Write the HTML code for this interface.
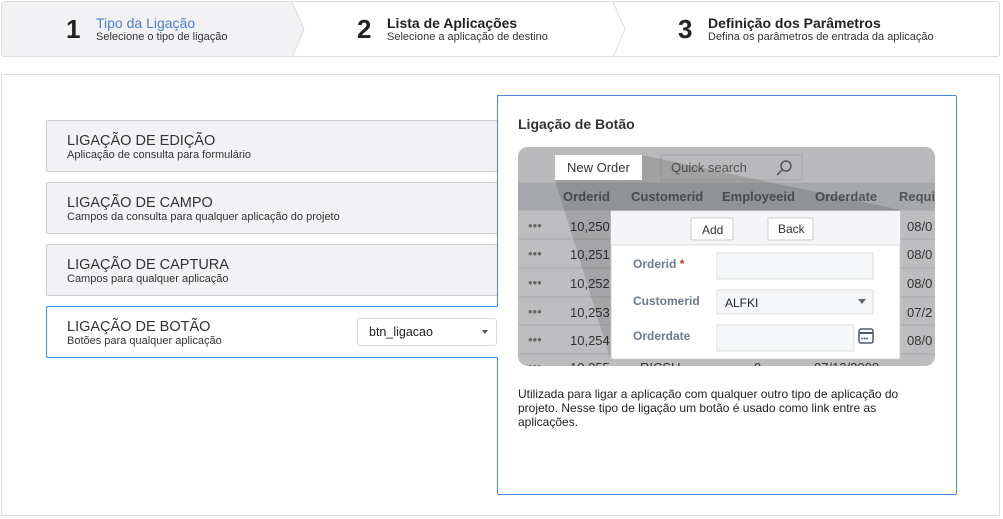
<!DOCTYPE html>
<html><head><meta charset="utf-8"><style>
*{box-sizing:border-box;margin:0;padding:0}
body{width:1003px;height:519px;background:#fff;font-family:"Liberation Sans",sans-serif;position:relative;overflow:hidden;color:#333}
.abs{position:absolute}
.wiz{left:1px;top:1px;width:999px;height:56px;border:1px solid #ddd;border-radius:3px;background:#fff;overflow:hidden}
.step{position:absolute;top:0;height:54px}
.num{position:absolute;top:12px;font-size:26px;font-weight:bold;color:#222}
.st{position:absolute;top:13px;font-size:14px;font-weight:bold;color:#222}
.ss{position:absolute;top:29px;font-size:11px;color:#333}
.main{left:1px;top:74px;width:999px;height:442px;border:1px solid #ddd}
.item{position:absolute;left:46px;width:452px;height:52px;background:#f2f2f4;border:1px solid #ccc;border-radius:2px}
.item .t{position:absolute;left:20px;top:12px;font-size:14.5px;color:#333}
.item .d{position:absolute;left:20px;top:28px;font-size:11px;color:#333}
.panel{left:497px;top:95px;width:460px;height:400px;border:1px solid #4a8ae0;border-radius:2px}
</style></head><body>
<div class="abs wiz">
 <div class="step" style="left:0;width:291px;background:#f2f2f4"></div>
 <svg class="abs" style="left:280px;top:0" width="345" height="56"><path d="M10 0 L22 27 L10 56" fill="#f2f2f4" stroke="#ddd"/><path d="M331 0 L343 27 L331 56" fill="#fff" stroke="#ddd"/></svg>
 <div class="num" style="left:64px">1</div>
 <div class="st" style="left:94px;color:#4a7fcb;font-weight:normal">Tipo da Ligação</div>
 <div class="ss" style="left:94px">Selecione o tipo de ligação</div>
 <div class="num" style="left:355px">2</div>
 <div class="st" style="left:385px">Lista de Aplicações</div>
 <div class="ss" style="left:385px">Selecione a aplicação de destino</div>
 <div class="num" style="left:676px">3</div>
 <div class="st" style="left:706px">Definição dos Parâmetros</div>
 <div class="ss" style="left:706px">Defina os parâmetros de entrada da aplicação</div>
</div>
<div class="abs main"></div>
<div class="abs panel">
 <div class="abs" style="left:20px;top:20px;font-size:14px;font-weight:bold;color:#333">Ligação de Botão</div>
 <svg class="abs" style="left:20px;top:51px" width="418" height="220" font-family="Liberation Sans" font-size="13">
  <defs><clipPath id="c"><rect x="0" y="0" width="417" height="219" rx="10"/></clipPath></defs>
  <g clip-path="url(#c)">
   <rect width="418" height="220" fill="#bdbdbf"/>
   <rect y="0" width="418" height="36" fill="#b9b9bb"/>
   <rect y="36" width="418" height="27" fill="#a6a8ac"/>
   <g stroke="#a9a9ab"><line x1="0" y1="36" x2="418" y2="36"/><line x1="0" y1="63" x2="418" y2="63"/><line x1="0" y1="92" x2="418" y2="92"/><line x1="0" y1="121" x2="418" y2="121"/><line x1="0" y1="150" x2="418" y2="150"/><line x1="0" y1="178" x2="418" y2="178"/><line x1="0" y1="207" x2="418" y2="207"/>
   <line x1="37" y1="36" x2="37" y2="63"/><line x1="102" y1="36" x2="102" y2="63"/><line x1="195" y1="36" x2="195" y2="63"/><line x1="287" y1="36" x2="287" y2="63"/><line x1="370" y1="36" x2="370" y2="63"/></g>
   <rect x="143" y="8" width="141" height="25" fill="none" stroke="#a8a8aa"/>
   <text x="153" y="25" fill="#555" font-size="13">Quick search</text>
   <circle cx="268" cy="19" r="5" fill="none" stroke="#555" stroke-width="1.5"/><line x1="264" y1="23" x2="259" y2="28" stroke="#555" stroke-width="1.5"/>
   <g font-weight="bold" fill="#555"><text x="45" y="54">Orderid</text><text x="113" y="54">Customerid</text><text x="204" y="54">Employeeid</text><text x="297" y="54">Orderdate</text><text x="381" y="54">Requi</text></g>
   <g fill="#333"><text x="52" y="84">10,250</text><text x="52" y="112">10,251</text><text x="52" y="141">10,252</text><text x="52" y="170">10,253</text><text x="52" y="198">10,254</text><text x="52" y="225">10,255</text>
   <text x="389" y="84">08/0</text><text x="389" y="112">08/0</text><text x="389" y="141">08/0</text><text x="389" y="170">07/2</text><text x="389" y="198">08/0</text>
   <text x="122" y="225">RICSU</text><text x="236" y="225">9</text><text x="296" y="225">07/12/2008</text></g>
   <g fill="#666"><text x="10" y="83">•••</text><text x="10" y="111">•••</text><text x="10" y="140">•••</text><text x="10" y="169">•••</text><text x="10" y="197">•••</text><text x="10" y="224">•••</text></g>
   <polygon points="37,33 124,8 383,63 93,214" fill="rgba(0,0,0,0.13)"/>
   <rect x="37" y="8" width="87" height="25" fill="#fff"/>
   <text x="49" y="25" fill="#333">New Order</text>
   <rect x="93" y="64" width="289" height="148" fill="#fff" stroke="#ccc"/>
   <rect x="93" y="64" width="289" height="34" fill="#f5f5f7"/>
   <line x1="93" y1="98" x2="382" y2="98" stroke="#ddd"/>
   <rect x="173" y="71" width="42" height="22" fill="#fff" stroke="#ccc"/><text x="184" y="87" font-size="12" fill="#333">Add</text>
   <rect x="250" y="71" width="45" height="22" fill="#fff" stroke="#ccc"/><text x="260" y="86" font-size="12" fill="#333">Back</text>
   <g font-weight="bold" font-size="12" fill="#6b7a8f"><text x="115" y="121">Orderid <tspan fill="#c0392b">*</tspan></text><text x="115" y="158">Customerid</text><text x="115" y="193">Orderdate</text></g>
   <rect x="199" y="106" width="156" height="26" fill="#f5f6f8" stroke="#ddd"/>
   <rect x="199" y="143" width="156" height="24" fill="#f5f6f8" stroke="#ddd"/><text x="207" y="160" font-size="12" fill="#222">ALFKI</text><polygon points="340,152 348,152 344,157" fill="#666"/>
   <rect x="199" y="178" width="137" height="26" fill="#f5f6f8" stroke="#ddd"/>
   <rect x="341" y="182" width="14" height="14" rx="2" fill="none" stroke="#4d5a6e" stroke-width="1.5"/><line x1="341" y1="186" x2="355" y2="186" stroke="#4d5a6e" stroke-width="2"/><text x="343" y="194" font-size="7" fill="#4d5a6e">•••</text>
  </g>
 </svg>
 <div class="abs" style="left:20px;top:291px;width:400px;font-size:12px;line-height:14px;color:#222">Utilizada para ligar a aplicação com qualquer outro tipo de aplicação do projeto. Nesse tipo de ligação um botão é usado como link entre as aplicações.</div>
</div>
<div class="item" style="top:120px"><div class="t">LIGAÇÃO DE EDIÇÃO</div><div class="d">Aplicação de consulta para formulário</div></div>
<div class="item" style="top:182px"><div class="t">LIGAÇÃO DE CAMPO</div><div class="d">Campos da consulta para qualquer aplicação do projeto</div></div>
<div class="item" style="top:244px"><div class="t">LIGAÇÃO DE CAPTURA</div><div class="d">Campos para qualquer aplicação</div></div>
<div class="abs" style="left:497px;top:95px;width:1px;height:212px;background:#4a8ae0"></div>
<div class="item" style="top:306px;background:#fff;border:1px solid #4a8ae0;border-right:1px solid #fff;width:452px"><div class="t">LIGAÇÃO DE BOTÃO</div><div class="d">Botões para qualquer aplicação</div>
 <div class="abs" style="left:310px;top:11px;width:140px;height:28px;border:1px solid #ddd;border-radius:3px;background:#fff"><span class="abs" style="left:11px;top:6px;font-size:12.5px;color:#222">btn_ligacao</span><span class="abs" style="left:124px;top:11px;border:3px solid transparent;border-top:4px solid #555"></span></div>
</div>
</body></html>
